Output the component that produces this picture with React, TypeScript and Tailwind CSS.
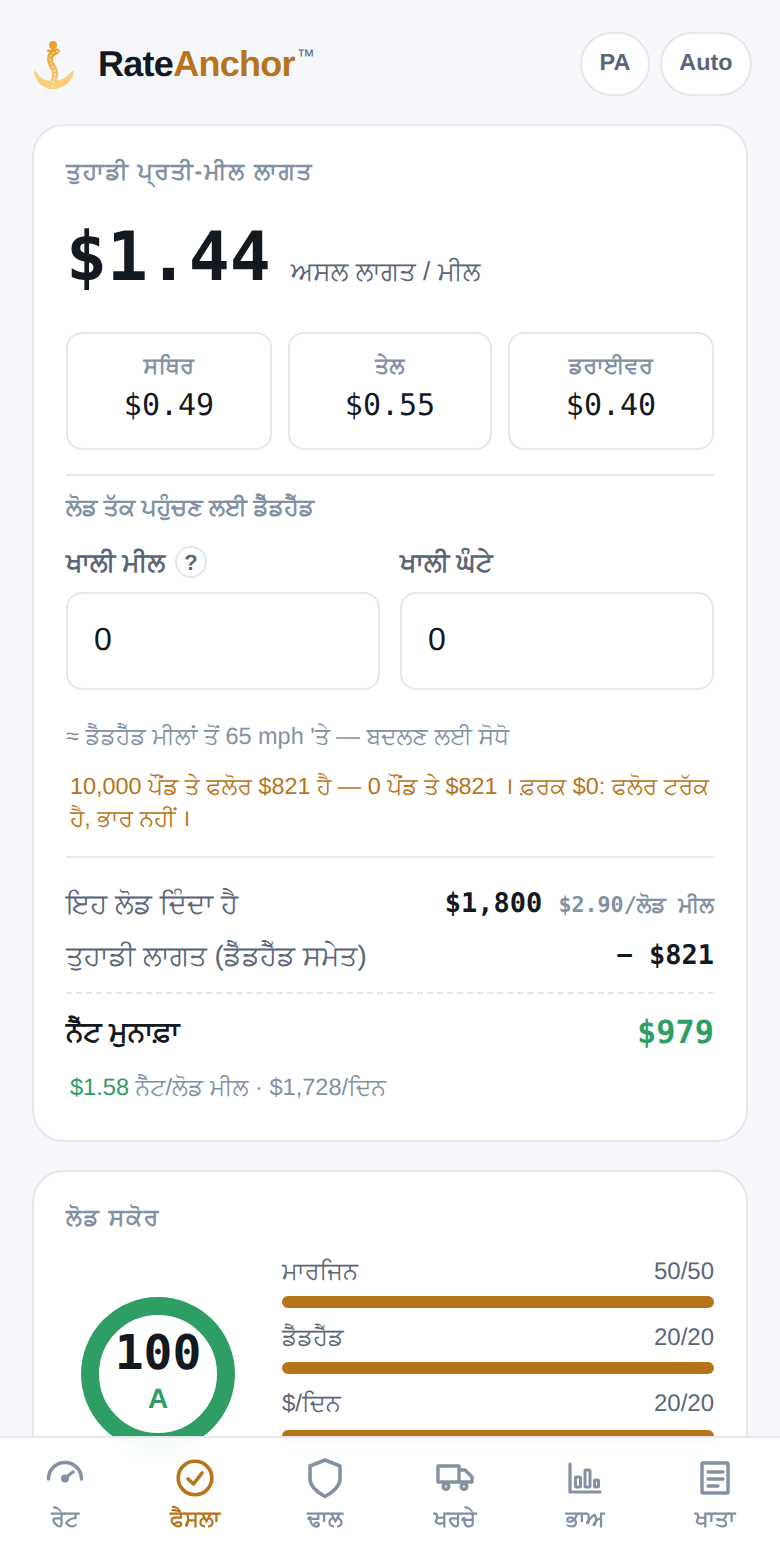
import React from "react";

const sans = "font-['Liberation_Sans','Noto_Sans',sans-serif]";
const mono = "font-['DejaVu_Sans_Mono',monospace]";

const Logo = () => (
  <svg width="44" height="56" viewBox="0 0 44 56" fill="none">
    <defs>
      <linearGradient id="anchorFade" x1="0" y1="0" x2="0" y2="1">
        <stop offset="0" stopColor="#e9a22e" />
        <stop offset="1" stopColor="#fdd685" />
      </linearGradient>
    </defs>
    <circle cx="21" cy="9" r="4" fill="#e9a22e" />
    <rect x="15" y="13.5" width="13" height="2.4" rx="1.2" fill="#e9a22e" />
    <rect x="19.5" y="11" width="3" height="6" fill="#e9a22e" />
    <path d="M2 34 C2 45 11 53 20.5 53 C31 53 42 45 42 34 L37 38 C34 42 28 45 20.5 45 C13 45 8 42 6 38 Z" fill="#fbcf79" />
    <path d="M26 15 C14 18 18 27 22 33 C26 40 20 45 20 52" stroke="url(#anchorFade)" strokeWidth="6" />
    <path d="M26 15 C14 18 18 27 22 33 C26 40 20 45 20 52" stroke="#fff" strokeWidth="1" strokeDasharray="2 2" />
  </svg>
);

const Stat = ({ label, value }: { label: string; value: string }) => (
  <div className="h-[118px] bg-white border-2 border-[#e5e7eb] rounded-2xl flex flex-col items-center pt-[14px]">
    <div className="text-[22px] leading-[36px] font-bold tracking-[0.5px] text-[#8491a3]">{label}</div>
    <div className={`${mono} text-[30px] leading-[36px] mt-[4px] text-[#14181f]`}>{value}</div>
  </div>
);

const Bar = ({ label, value, gap }: { label: string; value: string; gap: string }) => (
  <div className="h-[66px]">
    <div className="flex justify-between text-[24px] leading-[36px] text-[#5b6677]">
      <span>{label}</span>
      <span>{value}</span>
    </div>
    <div className={`h-3 ${gap} rounded-full bg-[#b7741a]`} />
  </div>
);

const NavItem = ({ label, active, children }: { label: string; active?: boolean; children: React.ReactNode }) => (
  <div className={`w-[130px] flex flex-col items-center font-bold ${active ? "text-[#b7741a]" : "text-[#8491a3]"}`}>
    <div className="h-[42px] flex items-center justify-center">{children}</div>
    <div className="text-[22px] leading-[30px] mt-[5px]">{label}</div>
  </div>
);

export default function App() {
  return (
    <div className={`${sans} [text-rendering:geometricPrecision] h-[1560px] overflow-hidden bg-[#f6f7fb]`}>
      <header className="h-[124px] pl-[32px] pr-[28px] pt-[32px] flex justify-between">
        <div className="flex items-center h-[64px] gap-[22px]">
          <Logo />
          <div className="text-[36px] font-bold tracking-[-0.72px] text-[#14181f]">
            Rate<span className="text-[#b7741a]">Anchor</span>
            <sup className="text-[18px] font-normal text-[#5b6677] tracking-normal -top-[14px] ml-[2px]">™</sup>
          </div>
        </div>
        <div className="flex gap-[10px]">
          <div className="h-[64px] w-[70px] pb-[2px] rounded-full bg-white border-2 border-[#e5e7eb] flex items-center justify-center text-[23.4px] font-bold text-[#5b6677]">PA</div>
          <div className="h-[64px] w-[92px] pb-[2px] rounded-full bg-white border-2 border-[#e5e7eb] flex items-center justify-center text-[23.4px] font-bold text-[#5b6677]">Auto</div>
        </div>
      </header>

      <main className="px-[32px]">
        <section className="h-[1018px] bg-white border-2 border-[#e5e7eb] rounded-[32px] px-[32px] pt-[27px]">
          <div className="text-[23.4px] leading-[36px] font-bold tracking-[1.75px] text-[#8491a3]">ਤੁਹਾਡੀ ਪ੍ਰਤੀ-ਮੀਲ ਲਾਗਤ</div>
          <div className="flex items-baseline gap-[20px] mt-[21px] h-[96px]">
            <span className={`${mono} text-[68px] leading-[96px] font-bold text-[#14181f]`}>$1.44</span>
            <span className="text-[26.2px] text-[#5b6677]">ਅਸਲ ਲਾਗਤ / ਮੀਲ</span>
          </div>
          <div className="grid grid-cols-[206px_204px_206px] gap-[16px] mt-[26px]">
            <Stat label="ਸਥਿਰ" value="$0.49" />
            <Stat label="ਤੇਲ" value="$0.55" />
            <Stat label="ਡਰਾਈਵਰ" value="$0.40" />
          </div>
          <div className="border-t-2 border-[#e5e7eb] mt-[24px]" />
          <div className="text-[23.6px] leading-[36px] font-bold text-[#8491a3] mt-[14px]">ਲੋਡ ਤੱਕ ਪਹੁੰਚਣ ਲਈ ਡੈੱਡਹੈੱਡ</div>
          <div className="flex gap-[20px] mt-[20px]">
            <div className="flex-1">
              <div className="flex items-center gap-[10px] h-[32px] text-[26px] font-bold text-[#5b6677]">
                ਖਾਲੀ ਮੀਲ
                <span className="w-[32px] h-[32px] rounded-full border-2 border-[#e5e7eb] flex items-center justify-center text-[22px] font-bold">?</span>
              </div>
              <div className="h-[98px] mt-[14px] pb-[4px] rounded-2xl border-2 border-[#e5e7eb] flex items-center pl-[26px] text-[32px] text-[#14181f]">0</div>
            </div>
            <div className="flex-1">
              <div className="h-[32px] flex items-center text-[26px] font-bold text-[#5b6677]">ਖਾਲੀ ਘੰਟੇ</div>
              <div className="h-[98px] mt-[14px] pb-[4px] rounded-2xl border-2 border-[#e5e7eb] flex items-center pl-[26px] text-[32px] text-[#14181f]">0</div>
            </div>
          </div>
          <div className="text-[23.5px] leading-[36px] text-[#8491a3] mt-[28px]">≈ ਡੈੱਡਹੈੱਡ ਮੀਲਾਂ ਤੋਂ 65 mph 'ਤੇ — ਬਦਲਣ ਲਈ ਸੋਧੋ</div>
          <div className="text-[23.4px] leading-[32px] text-[#b7741a] mt-[16px] pl-[4px]">
            10,000 ਪੌਂਡ ਤੇ ਫਲੋਰ $821 ਹੈ — 0 ਪੌਂਡ ਤੇ $821<span className="mx-[7px]">।</span>ਫ਼ਰਕ $0: ਫਲੋਰ ਟਰੱਕ ਹੈ, ਭਾਰ ਨਹੀਂ<span className="ml-[6px]">।</span>
          </div>
          <div className="border-t-2 border-[#e5e7eb] mt-[22px]" />
          <div className="flex justify-between items-center h-[52px] mt-[20px]">
            <span className="text-[27.8px] text-[#5b6677]">ਇਹ ਲੋਡ ਦਿੰਦਾ ਹੈ</span>
            <span className={`${mono} flex items-baseline gap-[16px] font-bold text-[27px] text-[#14181f]`}>
              $1,800 <span className="text-[21.7px] text-[#8491a3]">$2.90/ਲੋਡ ਮੀਲ</span>
            </span>
          </div>
          <div className="flex justify-between items-center h-[52px]">
            <span className="text-[27.8px] text-[#5b6677]">ਤੁਹਾਡੀ ਲਾਗਤ (ਡੈੱਡਹੈੱਡ ਸਮੇਤ)</span>
            <span className={`${mono} font-bold text-[27px] text-[#14181f]`}>− $821</span>
          </div>
          <div className="border-t-2 border-dashed border-[#e5e7eb] mt-[10px]" />
          <div className="flex justify-between items-center h-[76px]">
            <span className="text-[28px] font-bold text-[#14181f]">ਨੈੱਟ ਮੁਨਾਫ਼ਾ</span>
            <span className={`${mono} font-bold text-[32px] text-[#2f9e64]`}>$979</span>
          </div>
          <div className="text-[23.6px] leading-[36px] px-[4px] text-[#8491a3]">
            <span className="text-[#2f9e64]">$1.58</span> ਨੈੱਟ/ਲੋਡ ਮੀਲ · $1,728/ਦਿਨ
          </div>
        </section>

        <section className="h-[400px] mt-[28px] bg-white border-2 border-[#e5e7eb] rounded-[32px] px-[32px] pt-[27px]">
          <div className="text-[23.4px] leading-[36px] font-bold tracking-[1.75px] text-[#8491a3]">ਲੋਡ ਸਕੋਰ</div>
          <div className="flex mt-[19px]">
            <div className="w-[184px] pt-[43px]">
              <div className="ml-[15px] w-[154px] h-[154px] pb-[6px] rounded-full border-[18px] border-[#2f9e64] flex flex-col items-center justify-center">
                <div className={`${mono} text-[48px] leading-[56px] font-bold text-[#14181f]`}>100</div>
                <div className="text-[28px] leading-[36px] font-bold text-[#2f9e64]">A</div>
              </div>
            </div>
            <div className="flex-1 ml-[32px]">
              <Bar label="ਮਾਰਜਿਨ" value="50/50" gap="mt-[6px]" />
              <Bar label="ਡੈੱਡਹੈੱਡ" value="20/20" gap="mt-[6px]" />
              <Bar label="$/ਦਿਨ" value="20/20" gap="mt-[8px]" />
            </div>
          </div>
        </section>
      </main>

      <nav className="fixed left-0 right-0 bottom-0 h-[124px] bg-white/95 backdrop-blur-md border-t-2 border-[#e5e7eb] flex pt-[19px]">
        <NavItem label="ਰੇਟ">
          <svg className="mb-[12px]" width="38" height="24" viewBox="0 0 38 24" fill="none" stroke="currentColor" strokeWidth="3.6" strokeLinecap="round">
            <path d="M2.5 19 A16.5 16.5 0 0 1 35.5 19" />
            <circle cx="19" cy="18.5" r="4" fill="currentColor" stroke="none" />
            <path d="M19 18 L27 12" strokeWidth="3.4" />
          </svg>
        </NavItem>
        <NavItem label="ਫੈਸਲਾ" active>
          <svg width="38" height="38" viewBox="0 0 38 38" fill="none" stroke="currentColor" strokeWidth="3.6" strokeLinecap="round" strokeLinejoin="round">
            <circle cx="19" cy="19" r="16.8" />
            <path d="M12 20 L17.5 25 L26 14" />
          </svg>
        </NavItem>
        <NavItem label="ਢਾਲ">
          <svg width="36" height="42" viewBox="0 0 36 42" fill="none" stroke="currentColor" strokeWidth="3.6" strokeLinejoin="round">
            <path d="M18 3 L33 9 V22 C33 29 26 35 18 39.5 C10 35 3 29 3 22 V9 Z" />
          </svg>
        </NavItem>
        <NavItem label="ਖਰਚੇ">
          <svg width="38" height="28" viewBox="0 0 38 28" fill="none" stroke="currentColor" strokeWidth="3.4" strokeLinejoin="round">
            <path d="M2 2 H23 V18 H2 Z" />
            <path d="M23 6 H29 L36 13 V18 H23" />
            <circle cx="10" cy="22.5" r="2.8" fill="white" />
            <circle cx="28" cy="22.5" r="2.8" fill="white" />
          </svg>
        </NavItem>
        <NavItem label="ਭਾਅ">
          <svg width="34" height="32" viewBox="0 0 34 32" fill="none" stroke="currentColor" strokeWidth="3" strokeLinejoin="round" strokeLinecap="round">
            <path d="M2 2 V30 H32" strokeWidth="3.2" />
            <rect x="7.5" y="15" width="5" height="10" rx="1" />
            <rect x="17" y="8" width="5" height="17" rx="1" />
            <rect x="26.5" y="18" width="4" height="7" rx="1" />
          </svg>
        </NavItem>
        <NavItem label="ਖਾਤਾ">
          <svg width="30" height="34" viewBox="0 0 30 34" fill="none" stroke="currentColor" strokeWidth="3.4" strokeLinecap="round" strokeLinejoin="round">
            <rect x="2" y="2" width="26" height="30" rx="1" />
            <path d="M8 11 H23 M8 18 H23 M8 25 H18" />
          </svg>
        </NavItem>
      </nav>
    </div>
  );
}
